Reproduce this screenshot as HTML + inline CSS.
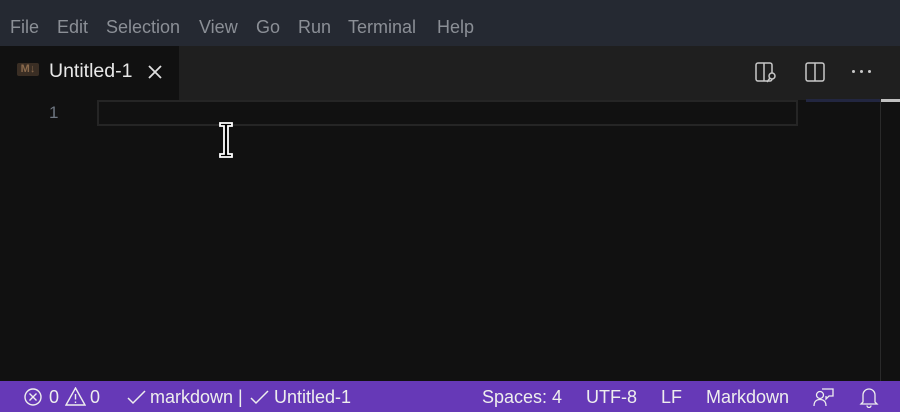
<!DOCTYPE html>
<html><head><style>
*{margin:0;padding:0;box-sizing:border-box}
body{width:900px;height:412px;overflow:hidden;background:#111;font-family:"Liberation Sans",sans-serif;position:relative}
.t{position:absolute;white-space:nowrap}
.m{position:absolute;top:17px;font-size:18px;color:#8b8f96}
.s{position:absolute;top:387px;font-size:18px;color:#eee;white-space:nowrap}
</style></head><body>
<div class="t" style="left:0;top:0;width:900px;height:46px;background:#252932"></div>
<span class="m" style="left:10px">File</span><span class="m" style="left:57px">Edit</span><span class="m" style="left:106px">Selection</span><span class="m" style="left:199px">View</span><span class="m" style="left:256px">Go</span><span class="m" style="left:298px">Run</span><span class="m" style="left:348px">Terminal</span><span class="m" style="left:437px">Help</span>
<div class="t" style="left:0;top:46px;width:900px;height:54px;background:#1f1f1f"></div>
<div class="t" style="left:0;top:46px;width:179px;height:54px;background:#111"></div>
<div class="t" style="left:17px;top:63px;width:22px;height:13px;background:#3a2e24;border-radius:2px;color:#8a6a4c;font-size:11px;font-weight:bold;line-height:13px;text-align:center">M↓</div>
<div class="t" style="left:49px;top:60px;font-size:19.5px;color:#e8e8e8">Untitled-1</div>
<svg class="t" style="left:147px;top:64px" width="16" height="16"><path d="M2 2L14 14M14 2L2 14" stroke="#e0e0e0" stroke-width="1.8"/></svg>
<svg class="t" style="left:754px;top:61px" width="24" height="24" fill="none" stroke="#c8c8c8" stroke-width="1.5"><rect x="2" y="2" width="16" height="18" rx="2"/><path d="M10 2V20"/><circle cx="18" cy="15" r="3" fill="#1f1f1f"/><path d="M16 17L13 21"/></svg>
<svg class="t" style="left:804px;top:61px" width="22" height="22" fill="none" stroke="#c8c8c8" stroke-width="1.5"><rect x="2" y="2" width="18" height="18" rx="2"/><path d="M11 2V20"/></svg>
<div class="t" style="left:852px;top:70px;width:3px;height:3px;background:#c8c8c8;border-radius:50%;box-shadow:8px 0 #c8c8c8,16px 0 #c8c8c8"></div>
<div class="t" style="left:806px;top:99px;width:74px;height:3px;background:#222640"></div>
<div class="t" style="left:881px;top:99px;width:19px;height:3px;background:#c0c0c0"></div>
<div class="t" style="left:880px;top:100px;width:1px;height:281px;background:#2a2a2a"></div>
<div class="t" style="left:49px;top:103px;font-size:17px;color:#6e7681">1</div>
<div class="t" style="left:97px;top:100px;width:701px;height:26px;border:2px solid #252525"></div>
<svg class="t" style="left:216px;top:121px" width="20" height="38"><path d="M4 2H16V5H12V33H16V36H4V33H8V5H4Z" fill="#000" stroke="#fff" stroke-width="1.8"/></svg>
<div class="t" style="left:0;top:381px;width:900px;height:31px;background:#6639b7"></div>
<svg class="t" style="left:24px;top:388px" width="18" height="18" fill="none" stroke="#eee" stroke-width="1.4"><circle cx="9" cy="9" r="8"/><path d="M5.5 5.5L12.5 12.5M12.5 5.5L5.5 12.5"/></svg>
<span class="s" style="left:49px">0</span>
<svg class="t" style="left:65px;top:387px" width="21" height="19" fill="none" stroke="#eee" stroke-width="1.4"><path d="M10.5 1L20 18H1Z"/><path d="M10.5 7V12.5M10.5 14.5V16"/></svg>
<span class="s" style="left:90px">0</span>
<svg class="t" style="left:127px;top:390px" width="19" height="15" fill="none" stroke="#eee" stroke-width="1.5"><path d="M1 8L6 13L18 1"/></svg>
<span class="s" style="left:150px">markdown</span><span class="s" style="left:238px">|</span>
<svg class="t" style="left:250px;top:390px" width="19" height="15" fill="none" stroke="#eee" stroke-width="1.5"><path d="M1 8L6 13L18 1"/></svg>
<span class="s" style="left:274px">Untitled-1</span>
<span class="s" style="left:482px">Spaces: 4</span><span class="s" style="left:586px">UTF-8</span><span class="s" style="left:661px">LF</span><span class="s" style="left:706px">Markdown</span>
<svg class="t" style="left:813px;top:387px" width="22" height="20" fill="none" stroke="#eee" stroke-width="1.3"><circle cx="7" cy="8" r="3.5"/><path d="M1 19C1 14 4 12.5 7 12.5S13 14 13 19"/><path d="M9 2H20V9H16L13 12V9"/></svg>
<svg class="t" style="left:859px;top:386px" width="20" height="22" fill="none" stroke="#eee" stroke-width="1.3"><path d="M4 16V9A6 6 0 0 1 16 9V16L18 18H2Z"/><path d="M8 19.5A2 2 0 0 0 12 19.5"/></svg>
</body></html>
